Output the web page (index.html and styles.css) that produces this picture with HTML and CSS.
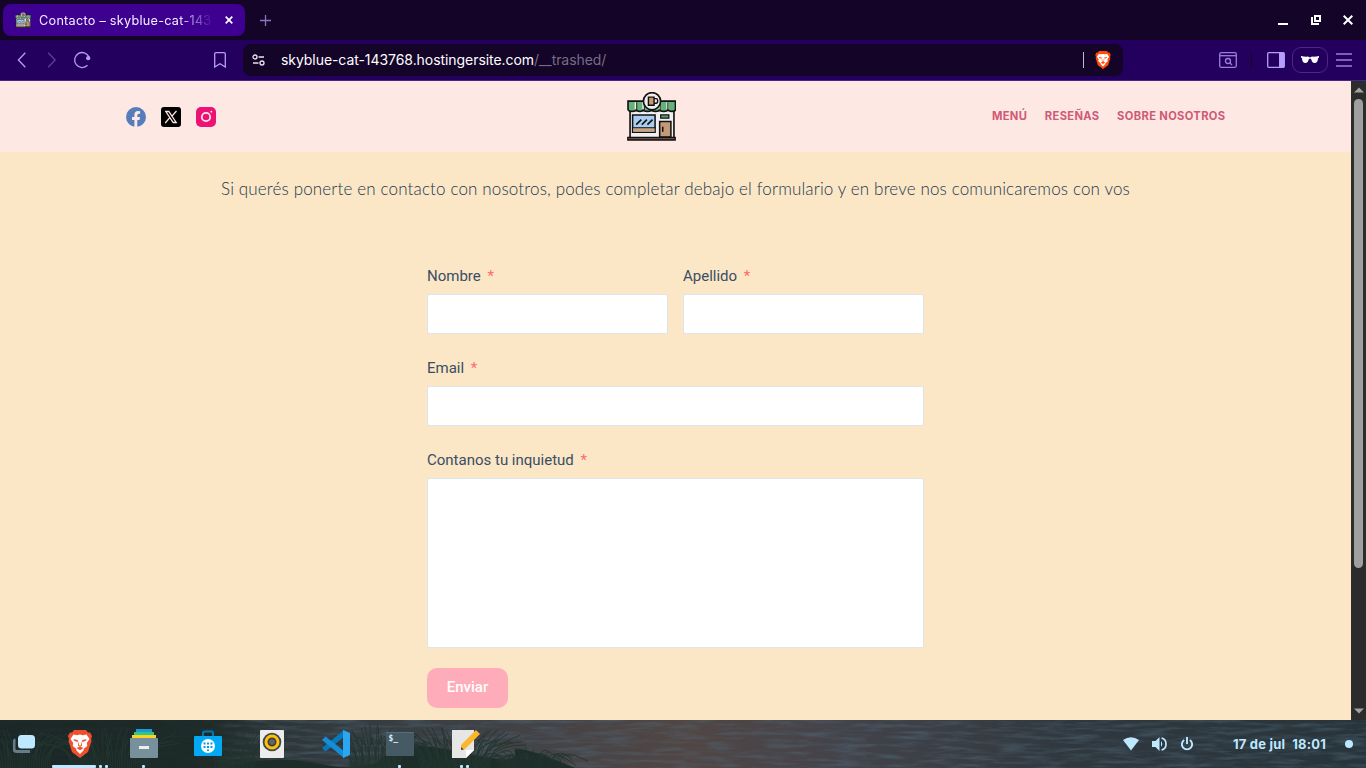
FILE: index.html
```html
<!DOCTYPE html>
<html lang="es">
<head>
<meta charset="utf-8">
<title>Contacto – skyblue-cat-143768</title>
<link rel="stylesheet" href="styles.css">
</head>
<body>
<svg width="0" height="0" class="defs">
  <symbol id="shop" viewBox="0 0 48 48">
    <path d="M3 17H46V45H3Z" fill="#f1eff1" stroke="#111" stroke-width="1.600"/>
    <path d="M1 9H47.500V17Q47.500 19 44 19T40 17Q40 19 36 19T32 17Q32 19 28 19T24 17Q24 19 20 19T16 17Q16 19 12.500 19T9 17Q9 19 5 19T1 17Z" fill="#63b378" stroke="#111" stroke-width="1.600"/>
    <path d="M7.500 10h2v7h-2zM15 10h2v7h-2zM31 10h2v7h-2zM38.500 10h2v7h-2z" fill="#f4eeee"/>
    <path d="M9.500 10v8M17 10v8M32.500 10v8M40 10v8" stroke="#222" stroke-width="1"/>
    <circle cx="24.500" cy="9" r="8.400" fill="#f2eded" stroke="#111" stroke-width="1.600"/>
    <path d="M21 5h5.500v8H21z" fill="#c99a72" stroke="#111" stroke-width="1.400"/>
    <path d="M26.500 6.500h2q1.500 0 1.500 1.500v1q0 2-1.500 2h-2" fill="none" stroke="#111" stroke-width="1.400"/>
    <path d="M5.500 22.500h22v17h-22z" fill="#a9cdf0" stroke="#111" stroke-width="1.500"/>
    <path d="M6 35.500h21v3.500H6z" fill="#c9a27e"/><path d="M5 35h23" stroke="#111"/>
    <path d="M9 32l5-5M14.500 32l5-5M20 32l5-5" stroke="#111" stroke-width="1.600"/>
    <path d="M33 22.500h8v3h-8z" fill="#5aa070" stroke="#111" stroke-width="1.200"/>
    <path d="M32 29h11v15H32z" fill="#c49a76" stroke="#111" stroke-width="1.500"/><path d="M35 34v5" stroke="#111" stroke-width="1.500"/>
    <path d="M.8 44.500h46.400V47H.8z" fill="#6d4b43" stroke="#111" stroke-width="1.300"/>
  </symbol>
  <symbol id="lion" viewBox="0 0 24 28">
    <path d="M6 0H18L20 2.500 22 2.500 24 6 23 9 23.500 11 20 22 12 28 4 22 .5 11 1 9 0 6 2 2.500 4 2.500Z" fill="currentColor"/>
    <path d="M5.500 4.500 9 5.200 12 4.500 15 5.200 18.500 4.500 21.500 9 18.800 13 19.300 16 16 18.500 15.500 20.500 12 24 8.500 20.500 8 18.500 4.700 16 5.200 13 2.500 9Z" fill="#fff"/>
    <path d="M5.500 9 10 10.200 9.500 12 6.500 11ZM18.500 9 14 10.200 14.500 12 17.500 11ZM10.500 10.500 10 15.500 12 17 14 15.500 13.500 10.500 13 15 12 15.800 11 15ZM8.500 18 12 16.500 15.500 18 12 20.200Z" fill="currentColor"/>
  </symbol>
</svg>

<div class="tabstrip">
  <div class="tab">
    <svg class="favicon" width="16" height="16"><use href="#shop"/></svg>
    <span class="tab-title">Contacto – skyblue-cat-1437</span>
    <svg width="8" height="8" viewBox="0 0 8 8"><path d="M.7.7l6.600 6.600M7.300.7L.7 7.300" stroke="#fff" stroke-width="1.700"/></svg>
  </div>
  <svg class="newtab" width="11" height="11" viewBox="0 0 11 11"><path d="M5.500 0v11M0 5.500h11" stroke="#8a74ba" stroke-width="1.300"/></svg>
  <div class="winbtns">
    <svg width="10" height="10" viewBox="0 0 10 10"><path d="M0 8h10v2H0z" fill="#fff"/></svg>
    <svg width="10" height="10" viewBox="0 0 10 10"><path d="M4 1h5v5H4zM1 2v7h7" fill="none" stroke="#fff" stroke-width="2"/></svg>
    <svg width="10" height="10" viewBox="0 0 10 10"><path d="M.7.7l8.600 8.600M9.300.7L.7 9.300" stroke="#fff" stroke-width="2"/></svg>
  </div>
</div>

<div class="toolbar">
  <div class="navbtns">
    <svg width="9" height="16" viewBox="0 0 9 16"><path d="M8.300.8L1.400 8l6.900 7.200" fill="none" stroke="#b79cff" stroke-width="1.300"/></svg>
    <svg width="9" height="16" viewBox="0 0 9 16"><path d="M1.200.8L8.100 8 1.200 15.200" fill="none" stroke="#5e3d9c" stroke-width="1.300"/></svg>
    <svg width="18" height="18" viewBox="0 0 18 18"><path d="M14.500 14.300A7.500 7.500 0 1 1 16 6" fill="none" stroke="#b79cff" stroke-width="1.300"/><circle cx="15.200" cy="7.200" r="2.100" fill="#b79cff"/></svg>
  </div>
  <svg class="bookmark" width="12" height="16" viewBox="0 0 12 16"><path d="M2 .7h8q1.300 0 1.300 1.300v13L6 11.800.7 15V2Q.7.7 2 .7Z" fill="none" stroke="#b79cff" stroke-width="1.300"/></svg>
  <div class="address">
    <svg width="13" height="12" viewBox="0 0 13 12"><g fill="none" stroke="#e8e4ee" stroke-width="1.300"><circle cx="3" cy="3" r="2"/><circle cx="10" cy="9" r="2"/><path d="M6.500 3H12M1 9h5.500"/></g></svg>
    <span class="url">skyblue-cat-143768.hostingersite.com<span class="path">/__trashed/</span></span>
    <i class="sep"></i>
    <svg class="shield" width="16" height="18"><use href="#lion"/></svg>
  </div>
  <div class="tools">
    <svg width="18" height="16" viewBox="0 0 18 16"><g fill="none" stroke="#9b7ddf" stroke-width="1.300"><rect x=".7" y=".7" width="16.600" height="14.600" rx="1.500"/><path d="M1 3.700h16"/><circle cx="9" cy="9" r="2.500"/><path d="M11 11l2 2"/></g></svg>
    <i class="divider"></i>
    <svg width="18" height="16" viewBox="0 0 18 16"><rect x=".7" y=".7" width="16.600" height="14.600" rx="1" fill="none" stroke="#b79cff" stroke-width="1.300"/><path d="M12 1h5v14h-5z" fill="#b79cff"/></svg>
    <div class="private"><svg width="18" height="8" viewBox="0 0 18 8"><path d="M0 0Q4 1 7 .6L9 1.400 11 .6Q14 1 18 0V1.500L17 2.300Q17 7 13.500 7 11 7 10 2.800H8Q7 7 4.500 7 1 7 1 2.300L0 1.500Z" fill="#fff"/></svg></div>
    <svg width="16" height="14" viewBox="0 0 16 14"><path d="M0 1h16M0 7h16M0 13h16" stroke="#9b7ddf" stroke-width="1.500"/></svg>
  </div>
</div>

<div class="viewport">
  <main class="page">
    <header class="site-header">
      <div class="social">
        <svg width="20" height="20" viewBox="0 0 20 20"><circle cx="10" cy="10" r="10" fill="#557dbc"/><path d="M8.400 20v-7H6v-2.900h2.400V8q0-3.900 3.700-3.900 1.200 0 2 .2v2.400h-1.300q-1.500 0-1.500 1.500v1.900h2.700l-.5 2.900h-2.200v7z" fill="#fde8e3"/></svg>
        <svg width="20" height="20" viewBox="0 0 20 20"><rect width="20" height="20" rx="3"/><path d="M4.800 4.500h3l7.400 11h-3zM15.500 4l-5 5.600M4.200 16l5-5.800" fill="none" stroke="#fde8e3" stroke-width="1.300"/></svg>
        <svg width="20" height="20" viewBox="0 0 20 20"><rect width="20" height="20" rx="5" fill="#ed1376"/><circle cx="10" cy="10" r="4.200" fill="none" stroke="#fde8e3" stroke-width="1.800"/><circle cx="15.300" cy="4.700" r=".9" fill="#fde8e3"/></svg>
      </div>
      <svg class="logo" width="49" height="49"><use href="#shop"/></svg>
      <nav class="menu"><a>MENÚ</a><a>RESEÑAS</a><a>SOBRE NOSOTROS</a></nav>
    </header>
    <p class="intro">Si querés ponerte en contacto con nosotros, podes completar debajo el formulario y en breve nos comunicaremos con vos</p>
    <form class="contact">
      <div class="names">
        <label class="field">Nombre <b>*</b><input type="text"></label>
        <label class="field">Apellido <b>*</b><input type="text"></label>
      </div>
      <label class="field">Email <b>*</b><input type="text"></label>
      <label class="field message">Contanos tu inquietud <b>*</b><textarea></textarea></label>
      <button type="button" class="send">Enviar</button>
    </form>
  </main>
  <div class="scrollbar">
    <svg width="10" height="6" viewBox="0 0 10 6"><path d="M0 5.500L5 .5l5 5z" fill="#a2a2a2"/></svg>
    <i class="thumb"></i>
    <svg width="10" height="6" viewBox="0 0 10 6"><path d="M0 .5l5 5 5-5z" fill="#a2a2a2"/></svg>
  </div>
</div>

<footer class="taskbar">
  <svg class="scene" width="1366" height="48" viewBox="0 0 1366 48">
    <defs>
      <linearGradient id="sea"><stop offset="0" stop-color="#1b2827"/><stop offset=".16" stop-color="#26302f"/><stop offset=".25" stop-color="#333b40"/><stop offset=".4" stop-color="#444346"/><stop offset=".5" stop-color="#514644"/><stop offset=".62" stop-color="#43434a"/><stop offset=".78" stop-color="#30383f"/><stop offset="1" stop-color="#28343b"/></linearGradient>
      <linearGradient id="bank"><stop offset="0" stop-color="#1b2726"/><stop offset=".75" stop-color="#1b2927"/><stop offset="1" stop-color="#1b2927" stop-opacity="0"/></linearGradient>
      <filter id="waves" x="0" y="0" width="100%" height="100%"><feTurbulence type="fractalNoise" baseFrequency=".03 .25" numOctaves="4" seed="5"/><feColorMatrix values="0 0 0 0 .08  0 0 0 0 .14  0 0 0 0 .19  2.400 0 0 0 -1"/></filter>
    </defs>
    <rect width="1366" height="48" fill="url(#sea)"/>
    <rect width="1366" height="48" filter="url(#waves)" opacity=".5"/>
    <rect width="260" height="48" fill="url(#bank)" opacity=".9"/>
    <path d="M225 48Q270 34 320 44T385 36 460 32 515 33 575 48Z" fill="#1d2d2a"/>
    <g id="grass" fill="none" stroke="#22352f" stroke-width=".9"></g>
  </svg>
  <div class="apps">
    <div class="app first"><svg width="22" height="20" viewBox="0 0 22 20"><path d="M2.500 6Q1 6 1 9v6q0 2.500 2.500 2.500H17" fill="none" stroke="#667c89" stroke-width="3"/><rect x="5" y="1" width="17" height="13.500" rx="3.500" fill="#bde8ff"/></svg></div>
    <div class="app"><svg class="brave" width="24" height="28"><use href="#lion"/></svg><span class="marks"><i class="wide"></i><i></i><i></i></span></div>
    <div class="app"><svg width="28" height="30" viewBox="0 0 28 30"><path d="M6 0h16v4H6z" fill="#159bd7"/><path d="M4 3h20v4H4z" fill="#31c58b"/><path d="M2 6h24v4H2z" fill="#ffd21f"/><rect y="9" width="28" height="20" rx="1" fill="#78909c"/><rect x="9" y="17" width="10" height="3" fill="#eee"/></svg><span class="marks one"><i></i></span></div>
    <div class="app"><svg width="28" height="28" viewBox="0 0 28 28"><path d="M9 7V3q0-1.500 1.500-1.500h7Q19 1.500 19 3v4" fill="none" stroke="#0277bd" stroke-width="2"/><rect y="6" width="28" height="20" rx="1" fill="#03a9f4"/><circle cx="14" cy="16" r="7" fill="#fff"/><path d="M9.500 12.500h2v2h-2zM13 12.500h2v2h-2zM16.500 12.500h2v2h-2zM9.500 16h2v2h-2zM13 16h2v2h-2zM16.500 16h2v2h-2zM13 19.500h2v1.500h-2z" fill="#039ee8"/></svg></div>
    <div class="app"><svg width="24" height="28" viewBox="0 0 24 28"><rect width="24" height="28" rx="1" fill="#ececec"/><circle cx="12" cy="12" r="9.300" fill="#40474a"/><circle cx="12" cy="12" r="6" fill="#404040" stroke="#ffc107" stroke-width="3"/><circle cx="12" cy="12" r="2.800" fill="#666"/></svg></div>
    <div class="app"><svg width="28" height="28" viewBox="0 0 28 28"><path d="M0 18l3.500 3.500L22 7V0z" fill="#0878bd"/><path d="M0 10l3.500-3.500L22 21v7z" fill="#168dd9"/><path d="M21 0l7 3v22l-7 3z" fill="#2aa7f0"/></svg></div>
    <div class="app"><svg width="28" height="24" viewBox="0 0 28 24"><rect width="28" height="24" rx="1" fill="#455a64"/><path d="M0 .5h28" stroke="#566e79"/><text x="2.500" y="9" class="prompt">$_</text></svg><span class="marks one"><i></i></span></div>
    <div class="app notes"><svg width="28" height="28" viewBox="0 0 28 28"><path d="M0 0h22v20l-8 8H0z" fill="#e6e6e6"/><path d="M14 28v-8h8z" fill="#fff"/><path d="M9 15L24 0l4 4-15 15-4 1z" fill="#fbb62a"/><path d="M9 17v3l3-.5z" fill="#5b4636"/></svg><span class="marks"><i></i><i></i></span></div>
  </div>
  <div class="tray">
    <svg width="16" height="14" viewBox="0 0 16 14"><path d="M0 3Q8-2.500 16 3L8 13.500z" fill="#bde8ff"/></svg>
    <svg width="16" height="14" viewBox="0 0 16 14"><path d="M0 4h3.500L7.500 0v14l-4-4H0zM9 4q2.500 3 0 6z" fill="#bde8ff"/><path d="M9.500 1Q14 2 14 7t-4.500 6" fill="none" stroke="#bde8ff" stroke-width="1.700"/></svg>
    <svg width="12" height="14" viewBox="0 0 12 14"><path d="M3.200 3A5.100 5.100 0 1 0 8.800 3M6 0v7" fill="none" stroke="#bde8ff" stroke-width="1.900"/></svg>
  </div>
  <div class="clock"><span>17 de jul</span><span>18:01</span></div>
  <i class="notice"></i>
</footer>
<script src="grass.js"></script>
</body>
</html>
```
FILE: styles.css
```css
* { box-sizing: border-box; }
body { margin: 0; width: 1366px; height: 768px; overflow: hidden; display: flex; flex-direction: column; font-family: Inter, sans-serif; }
svg { display: block; flex: none; }
i { display: block; flex: none; }
.defs { position: absolute; }
.tabstrip { height: 40px; background: #130428; display: flex; align-items: center; padding: 0 13px 0 3px; }
.tab { width: 242px; height: 32px; border-radius: 8px; background: #3e0091; display: flex; align-items: center; padding: 0 12px; color: #f3edff; }
.favicon { margin-right: 8px; }
.tab-title { width: 174px; padding-top: 1px; font-size: 12.7px; line-height: 20px; letter-spacing: .25px; white-space: nowrap; overflow: hidden; margin-right: 12px; mask-image: linear-gradient(90deg, #000 80%, transparent); }
.newtab { margin-left: 15px; }
.winbtns { margin-left: auto; display: flex; align-items: center; gap: 22.5px; }
.toolbar { height: 41px; background: #23005d; border-bottom: 1px solid #48238a; display: flex; align-items: center; padding: 0 14px 0 17px; }
.navbtns { display: flex; align-items: center; gap: 21px; width: 197px; }
.navbtns svg:last-child { margin-left: -4px; }
.bookmark { margin-right: 17px; }
.address { width: 880px; height: 32px; border-radius: 8px; background: #130428; display: flex; align-items: center; padding: 0 12px 0 9px; color: #fff; }
.url { margin-left: 16px; padding-bottom: 2px; font-size: 14px; letter-spacing: -.06px; white-space: nowrap; }
.path { color: #786c86; }
.sep { width: 1px; height: 16px; background: #c1b8d0; margin: 0 11px 0 auto; }
.shield { color: #ff4b0a; }
.tools { display: flex; align-items: center; margin-left: auto; }
.divider { width: 1px; height: 16px; background: #130428; margin: 0 15px 0 14px; }
.private { width: 36px; height: 26px; border: 1px solid #4b2788; border-radius: 9px; display: flex; align-items: center; justify-content: center; margin: 0 8px 0 7px; }
.viewport { height: 639px; display: flex; }
.page { width: 1351px; background: #fbe6c6; color: #394e64; }
.site-header { height: 71px; background: #fde8e3; display: grid; grid-template-columns: 500.5px 49px 1fr; align-items: center; padding: 0 125.500px 0 126px; }
.social { display: flex; gap: 15px; padding-top: 1px; }
.logo { width: 49px; }
.menu { display: flex; gap: 17.6px; justify-content: flex-end; padding-bottom: 2px; color: #cf5a76; font: 700 11.200px/20px Inter, sans-serif; letter-spacing: .34px; white-space: nowrap; }
.intro { margin: 25px 0 0; text-align: center; font: 300 17px/24px Lato, sans-serif; letter-spacing: .15px; white-space: nowrap; color: #22384f; }
.contact { width: 497px; margin: 64px 0 0 427px; font: 15px/22px Roboto, sans-serif; }
.names { display: grid; grid-template-columns: 1fr 1fr; gap: 15px; }
.field { display: block; height: 72px; margin-bottom: 20px; }
.field b { font-weight: 400; color: #ff6b6b; margin-left: 3px; }
.message { height: 201px; margin: 0; }
input, textarea { display: block; width: 100%; height: 40px; margin: 7px 0 0; border: 1px solid #dde4ea; border-radius: 2px; background: #fff; resize: none; }
textarea { height: 170px; }
.send { display: block; width: 81px; height: 40px; margin-top: 18px; padding: 0 0 2px; border: 0; border-radius: 10px; background: #ffacba; color: #fff; font: 500 15px Roboto, sans-serif; }
.scrollbar { width: 15px; background: #2c2c2c; display: flex; flex-direction: column; align-items: center; padding: 6px 0 6px; }
.thumb { width: 9px; height: 469px; margin: 6px 0 auto; border-radius: 5px; background: #9f9f9f; }
.taskbar { height: 48px; position: relative; display: flex; align-items: center; background: #27333a; color: #bde8ff; }
.scene { position: absolute; inset: 0; }
.apps { position: relative; display: flex; width: 1123px; }
.app { width: 64px; height: 48px; position: relative; display: flex; align-items: center; justify-content: center; }
.first { width: 48px; }
.notes { padding-left: 4px; }
.brave { color: #f1502f; }
.marks { position: absolute; left: 0; right: 0; bottom: 0; display: flex; justify-content: center; gap: 3px; }
.one { right: 1px; }
.marks i { width: 3px; height: 3px; border-radius: 1px; background: #bde8ff; }
.marks .wide { width: 44px; }
.prompt { font: bold 8px "DejaVu Sans Mono", monospace; fill: #d8f2fa; }
.tray { position: relative; display: flex; align-items: center; gap: 13px; }
.clock { position: relative; display: flex; gap: 7px; margin-left: 40px; width: 112px; font-size: 13px; font-weight: 700; letter-spacing: .2px; white-space: nowrap; }
.notice { position: relative; width: 8px; height: 8px; border-radius: 50%; background: #bde8ff; }
```
FILE: grass.js
```javascript
// Grass blades along the shore in the taskbar wallpaper.
const clumps = [[20, 60, 30], [110, 80, 40], [235, 40, 24], [375, 50, 50], [455, 70, 60], [530, 60, 30]];
const layer = document.getElementById('grass');
clumps.forEach(([cx, spread, count], c) => {
  for (let i = 0; i < count; i++) {
    const t = (i + 0.5) / count - 0.5;
    const wobble = Math.sin(i * 7.3 + c * 3);
    const x = cx + t * spread;
    const tipX = x + t * spread * 0.8 + wobble * 12;
    const tipY = (c === 5 ? 26 : 3) + Math.abs(wobble) * 14 + Math.abs(t) * 18;
    const blade = document.createElementNS('http://www.w3.org/2000/svg', 'path');
    blade.setAttribute('d', `M${x} 48Q${x} 25 ${tipX} ${tipY}`);
    layer.appendChild(blade);
  }
});
```
